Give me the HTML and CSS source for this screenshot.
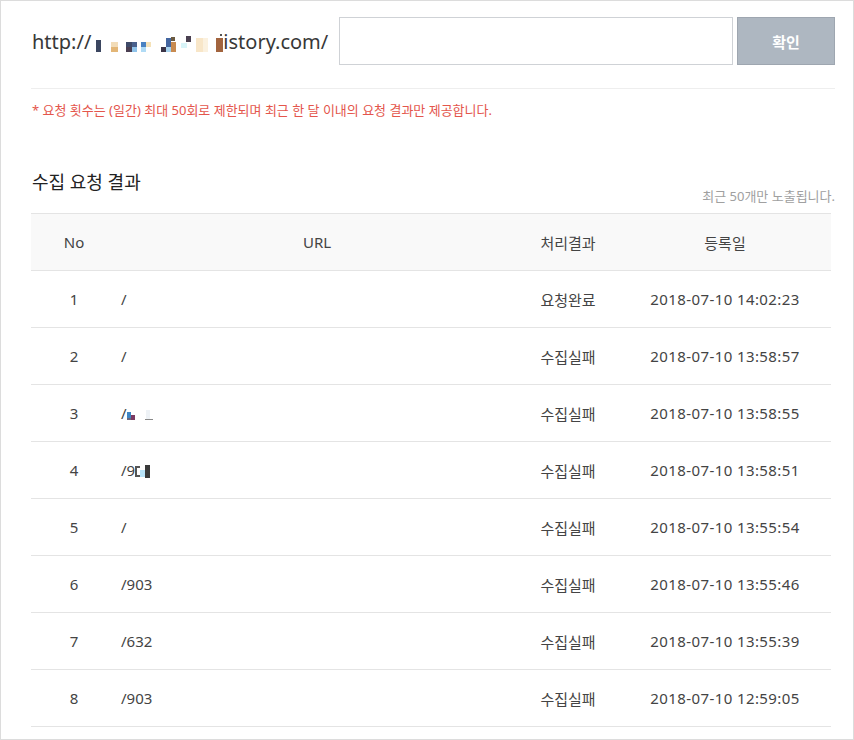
FILE: index.html
```html
<!DOCTYPE html>
<html lang="ko">
<head>
    <meta charset="UTF-8">
    <title>수집 요청</title>
    <link rel="stylesheet" href="styles.css">
</head>
<body>
    <div class="frame">
        <form class="url-form">
            <div class="url-prefix">http://<svg class="mosaic" width="130" height="20" viewBox="0 0 130 20">
                <rect x="3" y="7" width="5" height="12" fill="#3b4660"/>
                <rect x="18" y="9" width="7" height="5" fill="#f2dcb8"/>
                <rect x="18" y="14" width="7" height="5" fill="#e3b677"/>
                <rect x="33" y="9" width="6" height="5" fill="#3e4a68"/>
                <rect x="39" y="9" width="5" height="5" fill="#49608c"/>
                <rect x="33" y="14" width="6" height="5" fill="#4b3f52"/>
                <rect x="39" y="14" width="5" height="5" fill="#8fc3ea"/>
                <rect x="48" y="9" width="5" height="5" fill="#4a82c2"/>
                <rect x="53" y="9" width="5" height="5" fill="#f5e2b8"/>
                <rect x="48" y="14" width="5" height="5" fill="#b0dbf5"/>
                <rect x="68" y="14" width="5" height="5" fill="#3b3446"/>
                <rect x="73" y="5" width="5" height="9" fill="#4466a0"/>
                <rect x="73" y="14" width="5" height="5" fill="#a8d4f0"/>
                <rect x="78" y="9" width="5" height="10" fill="#c88a50"/>
                <rect x="78" y="4" width="4" height="4" fill="#6b5a40"/>
                <rect x="88" y="10" width="6" height="5" fill="#d8f4f8"/>
                <rect x="93" y="3" width="5" height="6" fill="#4a4050"/>
                <rect x="103" y="5" width="7" height="14" fill="#f8e6c8"/>
                <rect x="110" y="5" width="5" height="14" fill="#fbf1df"/>
                <rect x="123" y="5" width="7" height="14" fill="#a2643e"/>
                <rect x="127" y="1" width="2" height="2" fill="#555"/>
            </svg>istory.com/</div>
            <input type="text" class="url-input">
            <button type="button" class="btn-submit">확인</button>
        </form>

        <p class="notice">* 요청 횟수는 (일간) 최대 50회로 제한되며 최근 한 달 이내의 요청 결과만 제공합니다.</p>

        <div class="result-head">
            <h2>수집 요청 결과</h2>
            <span class="result-sub">최근 50개만 노출됩니다.</span>
        </div>

        <table class="result-table">
            <colgroup>
                <col class="col-no">
                <col class="col-url">
                <col class="col-status">
                <col class="col-date">
            </colgroup>
            <thead>
                <tr>
                    <th>No</th>
                    <th>URL</th>
                    <th>처리결과</th>
                    <th>등록일</th>
                </tr>
            </thead>
            <tbody>
                <tr><td>1</td><td class="url">/</td><td>요청완료</td><td class="date">2018-07-10 14:02:23</td></tr>
                <tr><td>2</td><td class="url">/</td><td>수집실패</td><td class="date">2018-07-10 13:58:57</td></tr>
                <tr><td>3</td><td class="url">/<svg class="blur" width="34" height="16" viewBox="0 0 34 16">
                    <rect x="0" y="6" width="4" height="6" fill="#3f86c4"/>
                    <rect x="4" y="9" width="4" height="5" fill="#7a3a62"/>
                    <rect x="0" y="12" width="4" height="2" fill="#6a6a80"/>
                    <rect x="19" y="4" width="4" height="9" fill="#eef2f6"/>
                    <rect x="18" y="13" width="8" height="1" fill="#888"/>
                </svg></td><td>수집실패</td><td class="date">2018-07-10 13:58:55</td></tr>
                <tr><td>4</td><td class="url">/9<svg class="blur" width="20" height="16" viewBox="0 0 20 16">
                    <rect x="0" y="3" width="5" height="11" fill="#555"/>
                    <rect x="2" y="5" width="3" height="7" fill="#fff"/>
                    <rect x="5" y="7" width="5" height="7" fill="#b8e3f8"/>
                    <rect x="10" y="2" width="5" height="13" fill="#3a3a3a"/>
                </svg></td><td>수집실패</td><td class="date">2018-07-10 13:58:51</td></tr>
                <tr><td>5</td><td class="url">/</td><td>수집실패</td><td class="date">2018-07-10 13:55:54</td></tr>
                <tr><td>6</td><td class="url">/903</td><td>수집실패</td><td class="date">2018-07-10 13:55:46</td></tr>
                <tr><td>7</td><td class="url">/632</td><td>수집실패</td><td class="date">2018-07-10 13:55:39</td></tr>
                <tr><td>8</td><td class="url">/903</td><td>수집실패</td><td class="date">2018-07-10 12:59:05</td></tr>
            </tbody>
        </table>
    </div>
</body>
</html>
```

FILE: styles.css
```css
html, body {
    margin: 0;
    padding: 0;
}
body {
    font-family: 'Noto Sans', 'Noto Sans CJK KR', sans-serif;
    color: #333;
    background: #fff;
}
.frame {
    box-sizing: border-box;
    width: 854px;
    height: 740px;
    border: 1px solid #dcdcdc;
    padding: 16px 18px 0 30px;
    overflow: hidden;
}
.url-form {
    display: flex;
    align-items: center;
    margin: 0;
    padding-bottom: 23px;
    border-bottom: 1px solid #eeeeee;
}
.url-prefix {
    font-size: 20px;
    color: #383838;
    width: 308px;
    padding-left: 1px;
    white-space: nowrap;
}
.mosaic {
    vertical-align: -4px;
    margin-left: 2px;
}
.url-input {
    box-sizing: border-box;
    width: 395px;
    height: 48px;
    border: 1px solid #cfd2d6;
    margin: 0 4px 0 0;
    padding: 0 10px;
    font-size: 15px;
}
.btn-submit {
    box-sizing: border-box;
    width: 98px;
    height: 48px;
    background: #aeb7c1;
    border: 1px solid #9ea6b0;
    color: #fff;
    font-family: 'Noto Sans CJK KR', sans-serif;
    font-size: 15px;
    font-weight: bold;
    padding: 0;
}
.notice {
    margin: 12px 0 0 1px;
    font-size: 13px;
    line-height: 18px;
    color: #e4564c;
}
.result-head {
    display: flex;
    justify-content: space-between;
    align-items: flex-end;
    margin-top: 50px;
}
.result-head h2 {
    margin: 0 0 0 1px;
    font-size: 18px;
    font-weight: normal;
    color: #222;
    line-height: 26px;
    padding-bottom: 10px;
}
.result-sub {
    font-size: 13px;
    color: #a0a0a0;
    line-height: 18px;
}
.result-table {
    width: 800px;
    margin-top: 8px;
    border-collapse: collapse;
    table-layout: fixed;
    font-size: 15px;
}
.col-no { width: 86px; }
.col-url { width: 400px; }
.col-status { width: 102px; }
.col-date { width: 212px; }
.result-table th {
    height: 56px;
    padding: 0;
    background: #f9f9f9;
    border-top: 1px solid #e4e4e4;
    border-bottom: 1px solid #e4e4e4;
    font-weight: normal;
    color: #444;
    text-align: center;
}
.result-table td {
    height: 56px;
    padding: 0;
    border-bottom: 1px solid #e4e4e4;
    text-align: center;
    color: #444;
}
.result-table td.url {
    text-align: left;
    padding-left: 4px;
}
.result-table td.date {
    letter-spacing: 0.4px;
}
.blur {
    vertical-align: -3px;
}
```
